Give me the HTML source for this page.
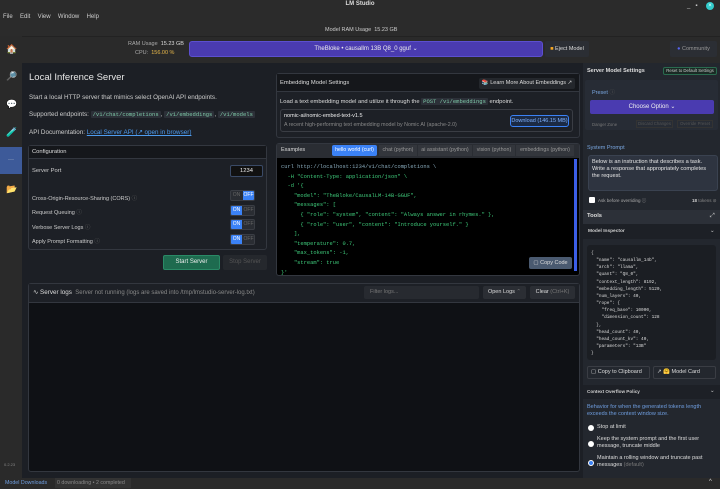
<!DOCTYPE html>
<html><head><meta charset="utf-8"><style>
*{box-sizing:border-box;margin:0;padding:0}
body{width:720px;height:489px;overflow:hidden;background:#1c1f25;font-family:"Liberation Sans",sans-serif;color:#d8d8d8;position:relative;font-size:6px}
.a{position:absolute}
.mono{font-family:"Liberation Mono",monospace}
.box{position:absolute;border:1px solid #33373f;border-radius:3px}
.tg{position:absolute;width:25px;height:11px;border-radius:2px;background:#2a2d33;border:1px solid #3a3d44;overflow:hidden}
.tg span{position:absolute;top:0;width:11px;height:9px;font-size:5px;text-align:center;line-height:9px;color:#666}
.tg .on{background:#3b82f6;color:#fff}
.btn{position:absolute;background:#2b2e34;border-radius:2px;font-size:5.5px;color:#ccc;text-align:center}
.code{background:#2c3038;border-radius:1px;padding:0 2px;color:#7ec9a8}
.radio{position:absolute;width:6px;height:6px;border-radius:50%;background:#fff}
</style></head><body>
<div class="a" style="left:0;top:0;width:720px;height:36px;background:#2b2b2b"></div>
<div class="a" style="left:0;top:1px;width:720px;text-align:center;font-size:6px;font-weight:bold;color:#ddd">LM Studio</div>
<div class="a" style="left:687px;top:3px;font-size:6px;color:#ccc">_&nbsp;&nbsp;&nbsp;▪</div>
<div class="a" style="left:706px;top:2px;width:8px;height:8px;border-radius:50%;background:#3cc;color:#fff;font-size:6px;text-align:center;line-height:8px">×</div>
<div class="a" style="left:3px;top:14px;font-size:6px;color:#ccc;word-spacing:2px">File&nbsp; Edit&nbsp; View&nbsp; Window&nbsp; Help</div>
<div class="a" style="left:325px;top:27px;font-size:5.5px;color:#ccc">Model RAM Usage&nbsp; 15.23 GB</div>
<div class="a" style="left:0;top:36px;width:720px;height:27px;background:#2a2a2a;border-top:1px solid #222"></div>
<div class="a" style="left:0;top:36px;width:22px;height:442px;background:#2a2a2a"></div>
<div class="a" style="left:128px;top:41px;font-size:5.5px;color:#aaa">RAM Usage&nbsp; <span style="color:#ddd">15.23 GB</span></div>
<div class="a" style="left:135px;top:50px;font-size:5.5px;color:#aaa">CPU:&nbsp; <span style="color:#e8b84a">156.00 %</span></div>
<div class="a" style="left:189px;top:41px;width:354px;height:16px;background:#4a3bb0;border-radius:3px;border:1px solid #5c4fd0;text-align:center;line-height:14px;font-size:6px;color:#eee">TheBloke • causallm 13B Q8_0 gguf ⌄</div>
<div class="btn" style="left:545px;top:41px;width:44px;height:16px;line-height:16px;color:#ddd"><span style="color:#f5a623">■</span> Eject Model</div>
<div class="btn" style="left:670px;top:41px;width:47px;height:16px;line-height:16px;color:#999"><span style="color:#5865f2">●</span> Community</div>
<div class="a" style="left:6px;top:44px;font-size:9px">🏠</div>
<div class="a" style="left:6px;top:71px;font-size:9px">🔎</div>
<div class="a" style="left:6px;top:99px;font-size:9px">💬</div>
<div class="a" style="left:6px;top:127px;font-size:9px">🧪</div>
<div class="a" style="left:0;top:147px;width:22px;height:27px;background:#3d5a99;text-align:center;line-height:27px;color:#ddd;font-size:6px">···</div>
<div class="a" style="left:6px;top:184px;font-size:9px">📂</div>
<div class="a" style="left:4px;top:462px;font-size:4px;color:#888">0.2.23</div>
<div class="a" style="left:29px;top:72px;font-size:9.5px;color:#e6e6e6">Local Inference Server</div>
<div class="a" style="left:29px;top:94px;font-size:6.3px;color:#ccc">Start a local HTTP server that mimics select OpenAI API endpoints.</div>
<div class="a" style="left:29px;top:111px;font-size:6.3px;color:#ccc">Supported endpoints: <span class="mono code" style="font-size:5.5px">/v1/chat/completions</span>, <span class="mono code" style="font-size:5.5px">/v1/embeddings</span>, <span class="mono code" style="font-size:5.5px">/v1/models</span></div>
<div class="a" style="left:29px;top:129px;font-size:6.3px;color:#ccc">API Documentation: <span style="color:#4d9cf0;text-decoration:underline">Local Server API (↗ open in browser)</span></div>
<div class="box" style="left:28px;top:145px;width:239px;height:105px;background:#1d2026"></div>
<div class="a" style="left:29px;top:146px;width:237px;height:13px;background:#15171b;border-bottom:1px solid #33373f"></div>
<div class="a" style="left:32px;top:149px;font-size:5.8px;color:#ddd">Configuration</div>
<div class="a" style="left:32px;top:168px;font-size:5.8px;color:#ccc">Server Port</div>
<div class="a" style="left:230px;top:165px;width:33px;height:12px;background:#111;border:1px solid #3a4a66;border-radius:2px;text-align:center;line-height:10px;font-size:5.8px;color:#eee">1234</div>
<div class="a" style="left:32px;top:194px;font-size:5.5px;color:#ccc">Cross-Origin-Resource-Sharing (CORS) <span style="color:#666">ⓘ</span></div>
<div class="a" style="left:32px;top:208px;font-size:5.5px;color:#ccc">Request Queuing <span style="color:#666">ⓘ</span></div>
<div class="a" style="left:32px;top:223px;font-size:5.5px;color:#ccc">Verbose Server Logs <span style="color:#666">ⓘ</span></div>
<div class="a" style="left:32px;top:237px;font-size:5.5px;color:#ccc">Apply Prompt Formatting <span style="color:#666">ⓘ</span></div>
<div class="tg" style="left:230px;top:190px"><span style="left:0">ON</span><span class="on" style="left:12px">OFF</span></div>
<div class="tg" style="left:230px;top:205px"><span class="on" style="left:0">ON</span><span style="left:12px">OFF</span></div>
<div class="tg" style="left:230px;top:219px"><span class="on" style="left:0">ON</span><span style="left:12px">OFF</span></div>
<div class="tg" style="left:230px;top:234px"><span class="on" style="left:0">ON</span><span style="left:12px">OFF</span></div>
<div class="a" style="left:163px;top:255px;width:57px;height:15px;background:#1e6b4f;border:1px solid #2a8a66;border-radius:2px;text-align:center;line-height:13px;font-size:6px;color:#eee">Start Server</div>
<div class="a" style="left:223px;top:255px;width:44px;height:15px;background:#25282d;border-radius:2px;text-align:center;line-height:15px;font-size:6px;color:#555">Stop Server</div>
<div class="box" style="left:276px;top:73px;width:304px;height:65px;background:#1d2026"></div>
<div class="a" style="left:277px;top:74px;width:302px;height:18px;background:#15171b;border-bottom:1px solid #33373f"></div>
<div class="a" style="left:280px;top:80px;font-size:5.8px;color:#ddd">Embedding Model Settings</div>
<div class="btn" style="left:479px;top:78px;width:96px;height:11px;line-height:11px;background:#24272c;color:#ddd">📚 Learn More About Embeddings ↗</div>
<div class="a" style="left:280px;top:98px;font-size:5.8px;color:#ddd">Load a text embedding model and utilize it through the <span class="mono code" style="font-size:5.5px">POST /v1/embeddings</span> endpoint.</div>
<div class="a" style="left:280px;top:109px;width:293px;height:23px;border:1px solid #3a3d44;border-radius:3px"></div>
<div class="a" style="left:284px;top:113px;font-size:5.5px;color:#eee">nomic-ai/nomic-embed-text-v1.5</div>
<div class="a" style="left:284px;top:122px;font-size:5.3px;color:#888">A recent high-performing text embedding model by Nomic AI (apache-2.0)</div>
<div class="a" style="left:510px;top:115px;width:59px;height:12px;border:1px solid #3b82f6;border-radius:3px;background:#1b2a44;text-align:center;line-height:10px;font-size:5.5px;color:#7fb2ff">Download (146.15 MB)</div>
<div class="box" style="left:276px;top:143px;width:304px;height:133px;background:#000"></div>
<div class="a" style="left:277px;top:144px;width:302px;height:14px;background:#2a2d33"></div>
<div class="a" style="left:281px;top:147px;font-size:5.5px;color:#ddd">Examples</div>
<div class="a" style="left:332px;top:145px;width:45px;height:11px;background:#3b82f6;border-radius:2px;color:#fff;font-size:5.3px;text-align:center;line-height:11px">hello world (curl)</div>
<div class="a" style="left:379px;top:145px;width:38px;height:11px;background:#33363c;color:#999;font-size:5.3px;text-align:center;line-height:11px">chat (python)</div>
<div class="a" style="left:418px;top:145px;width:54px;height:11px;background:#33363c;color:#999;font-size:5.3px;text-align:center;line-height:11px">ai assistant (python)</div>
<div class="a" style="left:473px;top:145px;width:42px;height:11px;background:#33363c;color:#999;font-size:5.3px;text-align:center;line-height:11px">vision (python)</div>
<div class="a" style="left:516px;top:145px;width:58px;height:11px;background:#33363c;color:#999;font-size:5.3px;text-align:center;line-height:11px">embeddings (python)</div>
<div class="a" style="left:574px;top:159px;width:3px;height:112px;background:#3b5ee6"></div>
<pre class="a mono" style="left:281px;top:163px;font-size:5.4px;line-height:9.6px;color:#3ec97a"><span style="color:#8ab">curl http://localhost:1234/v1/chat/completions \</span>
  -H "Content-Type: application/json" \
  -d '{
    "model": "TheBloke/CausalLM-14B-GGUF",
    "messages": [
      { "role": "system", "content": "Always answer in rhymes." },
      { "role": "user", "content": "Introduce yourself." }
    ],
    "temperature": 0.7,
    "max_tokens": -1,
    "stream": true
}'</pre>
<div class="a" style="left:529px;top:257px;width:43px;height:12px;background:#4a5a70;border-radius:2px;text-align:center;line-height:12px;font-size:5.5px;color:#ddd">▢ Copy Code</div>
<div class="box" style="left:28px;top:283px;width:552px;height:189px;background:#0f1115"></div>
<div class="a" style="left:29px;top:284px;width:550px;height:19px;background:#1d2026;border-bottom:1px solid #33373f"></div>
<div class="a" style="left:33px;top:289px;font-size:6.3px;color:#ddd">∿ Server logs <span style="color:#888;font-size:6px">&nbsp;Server not running (logs are saved into /tmp/lmstudio-server-log.txt)</span></div>
<div class="a" style="left:364px;top:286px;width:115px;height:13px;background:#272a30;border-radius:2px;font-size:5.5px;color:#777;padding-left:6px;line-height:13px">Filter logs...</div>
<div class="btn" style="left:483px;top:286px;width:43px;height:13px;line-height:13px;color:#ddd">Open Logs <span style="color:#777">⌃</span></div>
<div class="btn" style="left:530px;top:286px;width:45px;height:13px;line-height:13px;color:#ddd">Clear <span style="color:#777">(Ctrl+K)</span></div>
<div class="a" style="left:583px;top:63px;width:137px;height:415px;background:#23272e"></div>
<div class="a" style="left:587px;top:68px;font-size:5.5px;font-weight:bold;color:#ddd">Server Model Settings</div>
<div class="a" style="left:663px;top:67px;width:54px;height:8px;border:1px solid #2a6b4f;border-radius:2px;font-size:4.3px;color:#ccc;text-align:center;line-height:6px;background:#1a2a24">Reset to Default Settings</div>
<div class="a" style="left:585px;top:80px;width:133px;height:50px;background:#272c35;border-radius:2px"></div>
<div class="a" style="left:592px;top:88px;font-size:5.5px;color:#7aa7e0">Preset <span style="color:#555">ⓘ</span></div>
<div class="a" style="left:590px;top:100px;width:124px;height:14px;background:#4a3bb0;border-radius:2px;text-align:center;line-height:14px;font-size:6px;color:#eee">Choose Option ⌄</div>
<div class="a" style="left:592px;top:122px;font-size:4.3px;color:#777">Danger Zone</div>
<div class="a" style="left:636px;top:120px;width:37px;height:8px;border:1px solid #333;font-size:4.3px;color:#555;text-align:center;line-height:6px">Discard Changes</div>
<div class="a" style="left:677px;top:120px;width:36px;height:8px;border:1px solid #333;font-size:4.3px;color:#555;text-align:center;line-height:6px">Override Preset</div>
<div class="a" style="left:587px;top:145px;font-size:5.5px;color:#7aa7e0">System Prompt</div>
<div class="a" style="left:588px;top:155px;width:130px;height:36px;background:#2e3440;border:1px solid #3a4250;border-radius:3px;padding:3px;font-size:5.6px;line-height:7.2px;color:#e6e6e6">Below is an instruction that describes a task. Write a response that appropriately completes the request.</div>
<div class="a" style="left:589px;top:197px;width:6px;height:6px;background:#fff;border-radius:1px"></div>
<div class="a" style="left:598px;top:198px;font-size:4.5px;color:#aaa">Ask before overriding ⓘ</div>
<div class="a" style="left:692px;top:198px;font-size:4.5px;color:#888"><b style="color:#ccc">18</b> tokens ⊘</div>
<div class="a" style="left:583px;top:210px;width:137px;height:14px;background:#2c3038"></div>
<div class="a" style="left:587px;top:213px;font-size:5.8px;font-weight:bold;color:#ddd">Tools</div>
<div class="a" style="left:710px;top:213px;font-size:6px;color:#ccc">⤢</div>
<div class="a" style="left:583px;top:224px;width:137px;height:15px;background:#1d2026"></div>
<div class="a" style="left:588px;top:229px;font-size:4.8px;font-weight:bold;color:#ccc">Model Inspector</div>
<div class="a" style="left:710px;top:228px;font-size:5.5px;color:#ccc">⌄</div>
<div class="a" style="left:587px;top:245px;width:129px;height:115px;background:#1b1e23;border-radius:3px"></div>
<pre class="a mono" style="left:591px;top:250px;font-size:4.4px;line-height:7.15px;color:#ddd">{
  "name": "causallm_14b",
  "arch": "llama",
  "quant": "Q8_0",
  "context_length": 8192,
  "embedding_length": 5120,
  "num_layers": 40,
  "rope": {
    "freq_base": 10000,
    "dimension_count": 128
  },
  "head_count": 40,
  "head_count_kv": 40,
  "parameters": "13B"
}</pre>
<div class="a" style="left:587px;top:366px;width:63px;height:13px;border:1px solid #3a3d44;border-radius:2px;font-size:5.5px;line-height:11px;color:#ddd;padding-left:3px">▢ Copy to Clipboard</div>
<div class="a" style="left:653px;top:366px;width:63px;height:13px;border:1px solid #3a3d44;border-radius:2px;font-size:5.5px;line-height:11px;color:#ddd;padding-left:3px">↗ 🤗 Model Card</div>
<div class="a" style="left:583px;top:385px;width:137px;height:14px;background:#1d2026"></div>
<div class="a" style="left:587px;top:389px;font-size:4.6px;font-weight:bold;color:#ccc">Context Overflow Policy</div>
<div class="a" style="left:710px;top:388px;font-size:5.5px;color:#ccc">⌄</div>
<div class="a" style="left:587px;top:404px;width:130px;font-size:5.5px;line-height:7px;color:#6f9ee0">Behavior for when the generated tokens length exceeds the context window size.</div>
<div class="radio" style="left:588px;top:425px"></div>
<div class="a" style="left:597px;top:424px;font-size:5.5px;color:#ddd">Stop at limit</div>
<div class="radio" style="left:588px;top:441px"></div>
<div class="a" style="left:597px;top:436px;width:120px;font-size:5.5px;line-height:7px;color:#ddd">Keep the system prompt and the first user message, truncate middle</div>
<div class="radio" style="left:588px;top:460px;border:1.5px solid #fff;background:#3b82f6"></div>
<div class="a" style="left:597px;top:455px;width:120px;font-size:5.5px;line-height:7px;color:#ddd">Maintain a rolling window and truncate past messages <span style="color:#777">(default)</span></div>
<div class="a" style="left:0;top:478px;width:720px;height:11px;background:#2a2a2a"></div>
<div class="a" style="left:5px;top:480px;font-size:5.3px;color:#6f9ee0">Model Downloads</div>
<div class="a" style="left:55px;top:478px;width:76px;height:10px;background:#333;font-size:5.3px;color:#888;line-height:10px;padding-left:2px">0 downloading • 2 completed</div>
<div class="a" style="left:709px;top:479px;font-size:6px;color:#ddd">^</div>
</body></html>
